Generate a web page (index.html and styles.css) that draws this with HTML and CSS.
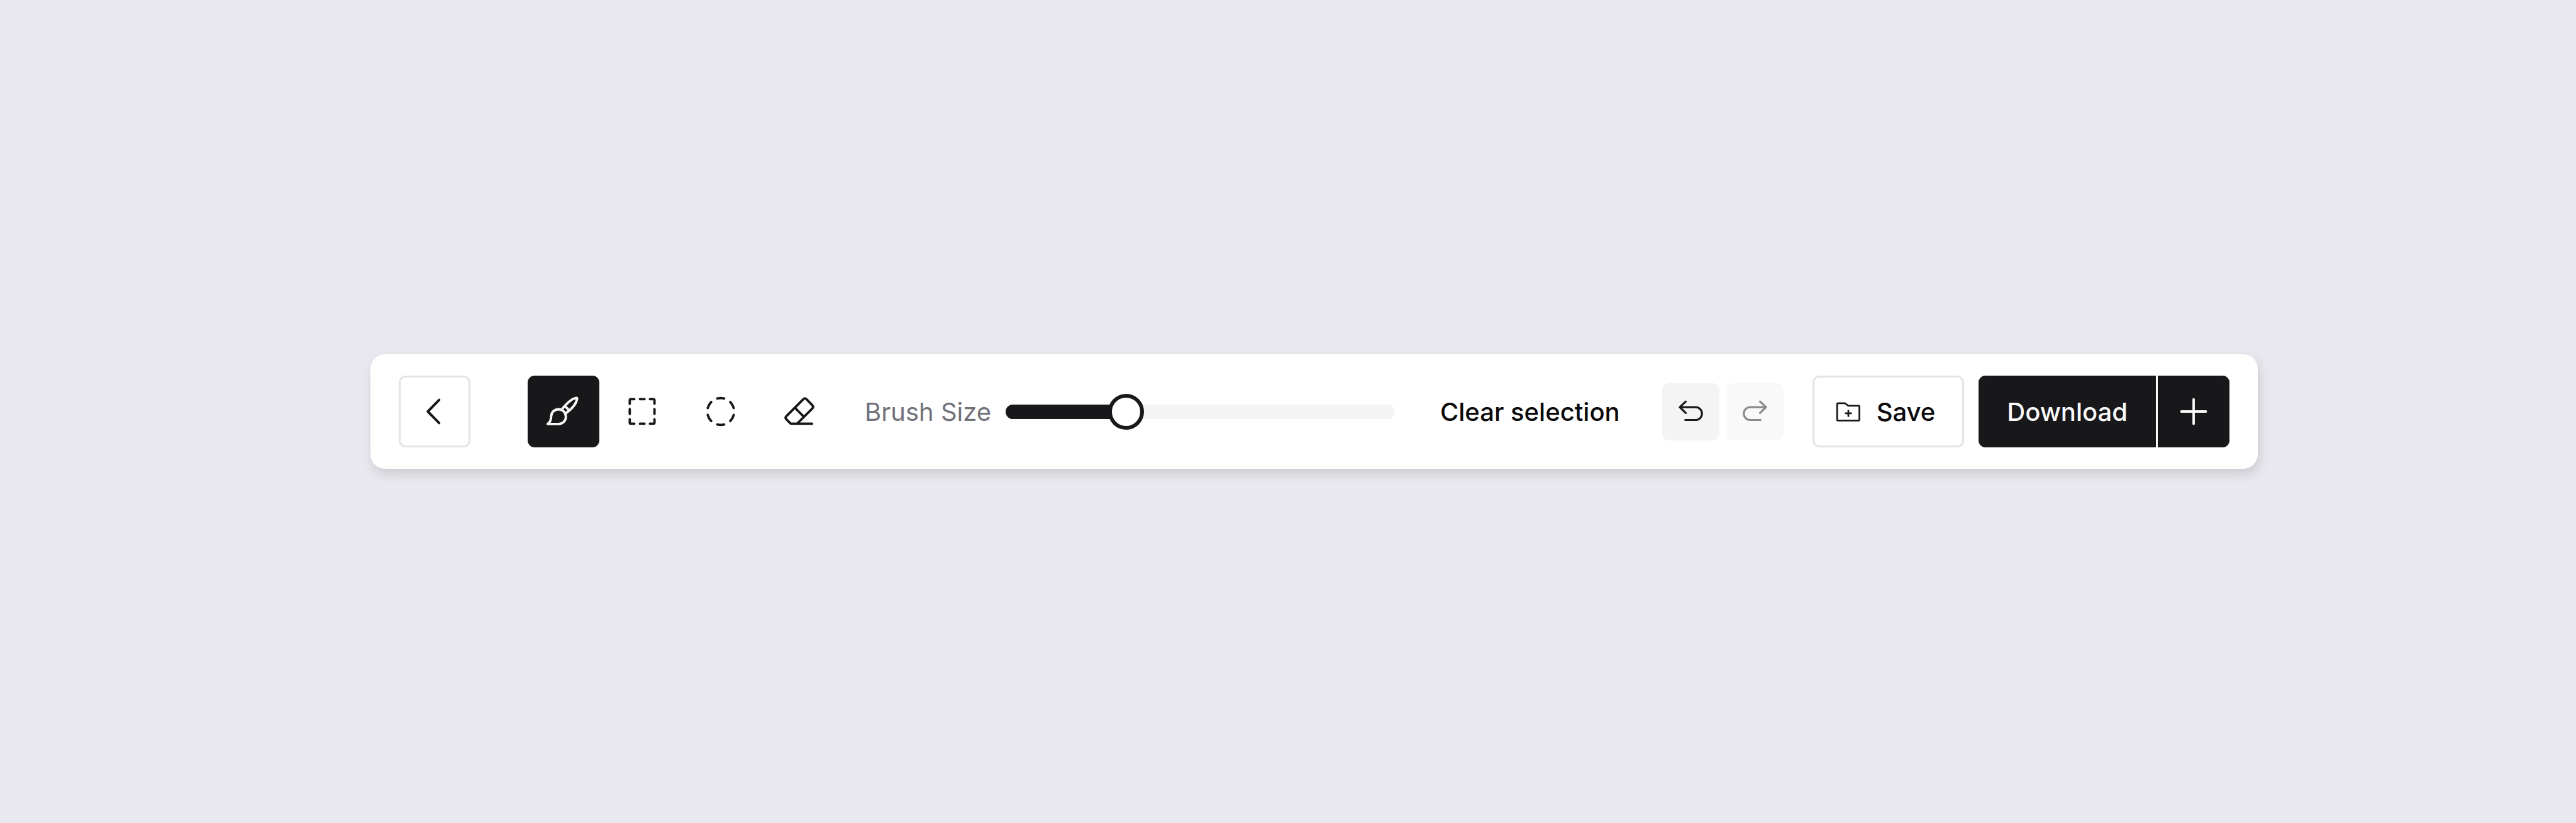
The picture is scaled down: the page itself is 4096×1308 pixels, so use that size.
FILE: index.html
```html
<!DOCTYPE html>
<html lang="en">
<head>
<meta charset="utf-8">
<meta name="viewport" content="width=device-width, initial-scale=1">
<title>Image editor toolbar</title>
<link rel="stylesheet" href="styles.css">
</head>
<body>
<main class="stage">
  <div class="toolbar" role="toolbar" aria-label="Mask editor">
    <button class="btn btn-outline btn-square" type="button" aria-label="Back">
      <svg class="icon" viewBox="0 0 120 120" stroke-width="4.2"><path d="M67.700 40.700 48.700 60l19 19.300"/></svg>
    </button>

    <div class="tools">
      <button class="btn btn-square btn-dark" type="button" aria-label="Brush" aria-pressed="true">
        <svg class="icon" viewBox="0 0 120 120" stroke-width="4"><path d="M33.500 81H51.700A12.300 12.300 0 0 0 51.700 56.300C44.600 56.300 39.300 61.800 39.300 68.500C39.300 73.500 38 78 33.500 81Z"/><path d="M57.500 56C64 48 73 38 82 37.200Q83 37.200 82.800 38.200C82 46 74 55.500 64.500 62.500M62.300 51 69.500 58"/></svg>
      </button>
      <button class="btn btn-square" type="button" aria-label="Rectangle select">
        <svg class="icon" viewBox="0 0 120 120" stroke-width="4"><path d="M47 39.300H41Q39.300 39.300 39.300 41V47M56.300 39.300H64M73 39.300H79Q80.700 39.300 80.700 41V47M80.700 56V64M80.700 73V78.700Q80.700 80.400 79 80.400H73M64 80.400H56.300M47 80.400H41Q39.300 80.400 39.300 78.700V73M39.300 64V56"/></svg>
      </button>
      <button class="btn btn-square" type="button" aria-label="Ellipse select">
        <svg class="icon" viewBox="0 0 120 120" stroke-width="4"><circle cx="60" cy="60" r="22.500" pathLength="360" stroke-dasharray="30 30" stroke-dashoffset="-15"/></svg>
      </button>
      <button class="btn btn-square" type="button" aria-label="Eraser">
        <svg class="icon" viewBox="0 0 120 120" stroke-width="4"><path d="M81.300 80.400H45.700L38.300 73Q35.700 70.400 38.300 67.800L66.700 39.400Q69.300 36.800 71.900 39.400L81.800 49.600Q84.400 52.200 81.800 54.800L56.300 80.400M52.700 53.800 67.300 68.600"/></svg>
      </button>
    </div>

    <div class="size-field">
      <label class="size-label text" for="brush-size">Brush Size</label>
      <input class="slider" id="brush-size" type="range" min="0" max="100" value="29">
    </div>

    <button class="btn btn-text" type="button"><span class="text">Clear selection</span></button>

    <div class="history">
      <button class="btn btn-soft" type="button" aria-label="Undo">
        <svg class="icon" viewBox="0 0 96 96" stroke-width="3.400"><path d="M39.500 30.700 29.500 40.300l10 9.700M29.500 40.300H56A10.700 10.700 0 0 1 56 61.700H38.700"/></svg>
      </button>
      <button class="btn btn-soft" type="button" aria-label="Redo" disabled>
        <svg class="icon" viewBox="0 0 96 96" stroke-width="3.400"><path d="M56.500 30.700 66.500 40.300l-10 9.700M66.500 40.300H40A10.700 10.700 0 0 0 40 61.700H57.300"/></svg>
      </button>
    </div>

    <button class="btn btn-outline btn-save" type="button">
      <svg class="icon icon-small" viewBox="0 0 48 48" stroke-width="2.900"><path d="M7 10.400H18.300L24 14.400H41Q42.300 14.400 42.300 15.700V37.600Q42.300 38.900 41 38.900H6.700Q5.400 38.900 5.400 37.600V12Q5.400 10.400 7 10.400ZM24 22.500V31.700M19.400 27.100H28.600"/></svg>
      <span class="text">Save</span>
    </button>

    <div class="split">
      <button class="btn btn-dark btn-download" type="button"><span class="text">Download</span></button>
      <button class="btn btn-dark btn-square btn-more" type="button" aria-label="More download options">
        <svg class="icon" viewBox="0 0 120 120" stroke-width="4"><path d="M60 39.500V80.500M39.500 60H80.500"/></svg>
      </button>
    </div>
  </div>
</main>
</body>
</html>
```
FILE: styles.css
```css
:root {
  --ink: #18181a;
  --line: #e4e4e4;
  --soft: #f4f4f4;
  --control: 114px;
  --radius: 11px;
}

* {
  box-sizing: border-box;
}

body {
  margin: 0;
  background: #e9e8ee;
  color: #09090b;
  font-family: Inter, "Liberation Sans", sans-serif;
  font-size: 40px;
  line-height: 56px;
}

.stage {
  display: flex;
  align-items: center;
  min-height: 100vh;
  padding: 46px 506px 46px 589px;
}

.toolbar {
  display: flex;
  flex: 1;
  align-items: center;
  padding: 34px 45px;
  border-radius: 23px;
  background: #fff;
  box-shadow: 3px 8px 17px rgba(0, 0, 0, 0.13);
}

.tools {
  display: flex;
  gap: 11px;
  margin-left: 91px;
}

.btn {
  display: flex;
  align-items: center;
  justify-content: center;
  height: var(--control);
  padding: 0;
  border: 0;
  border-radius: var(--radius);
  background: none;
  color: inherit;
  font: inherit;
  font-weight: 500;
  white-space: nowrap;
  cursor: pointer;
}

.btn-square {
  width: var(--control);
}

.btn-outline {
  border: 3px solid var(--line);
}

.btn-dark {
  background: var(--ink);
  color: #fafafa;
}

.btn-soft {
  width: 91px;
  height: 91px;
  background: var(--soft);
}

.btn-soft:disabled {
  opacity: 0.5;
  cursor: default;
}

.btn-text {
  margin-left: 72px;
}

.text {
  padding-top: 2px;
}

.icon {
  flex: none;
  width: var(--control);
  height: var(--control);
  fill: none;
  stroke: var(--ink);
  stroke-linecap: round;
  stroke-linejoin: round;
}

.btn-dark .icon {
  stroke: #fafafa;
}

.btn-soft .icon {
  width: 91px;
  height: 91px;
}

.icon-small {
  width: 46px;
  height: 46px;
}

.size-field {
  display: flex;
  flex: 1;
  align-items: center;
  gap: 23px;
  margin-left: 47px;
}

.size-label {
  color: #71717a;
  white-space: nowrap;
}

.slider {
  flex: 1;
  min-width: 0;
  height: 57px;
  margin: 0;
  background: none;
  appearance: none;
  -webkit-appearance: none;
}

.slider::-webkit-slider-runnable-track {
  height: 23px;
  border-radius: 12px;
  background: linear-gradient(to right, var(--ink) 31%, var(--soft) 31%);
}

.slider::-webkit-slider-thumb {
  width: 57px;
  height: 57px;
  margin-top: -17px;
  border: 6px solid var(--ink);
  border-radius: 50%;
  background: #fff;
  -webkit-appearance: none;
}

.history {
  display: flex;
  gap: 11px;
  margin-left: 67px;
}

.btn-save {
  gap: 22px;
  margin-left: 46px;
  padding: 0 43px 0 31px;
}

.split {
  display: flex;
  gap: 3px;
  margin-left: 23px;
}

.btn-download {
  padding: 0 45px;
  border-radius: var(--radius) 0 0 var(--radius);
}

.btn-more {
  border-radius: 0 var(--radius) var(--radius) 0;
}
```
